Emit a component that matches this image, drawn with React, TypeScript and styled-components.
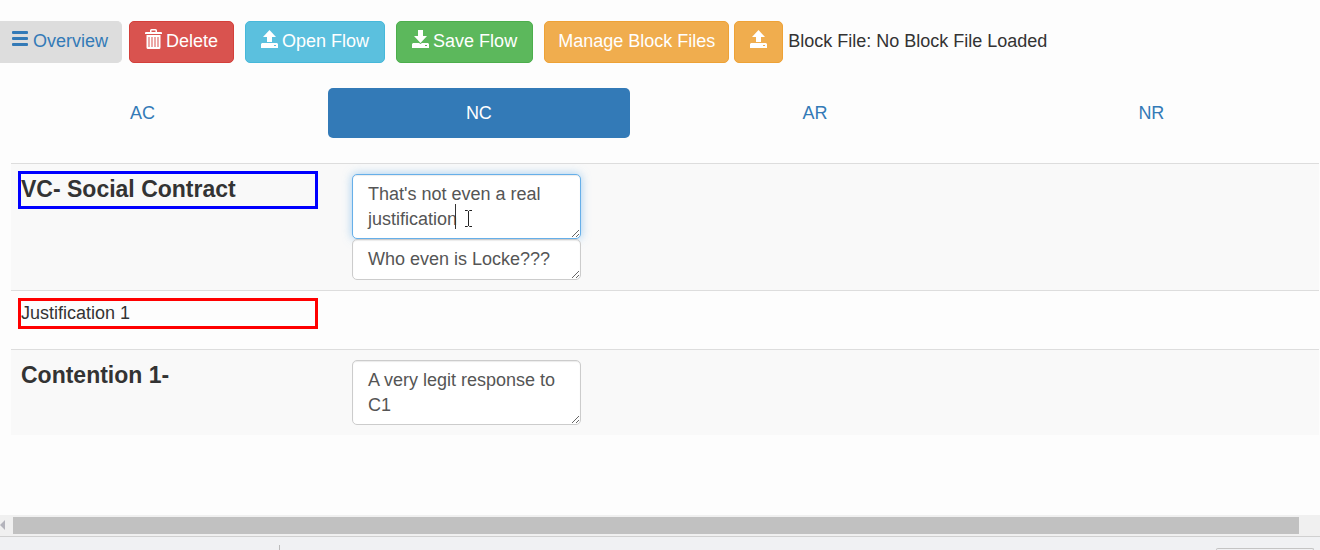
import React from "react";
import styled, { createGlobalStyle, css } from "styled-components";

const GlobalStyle = createGlobalStyle`
  *, *::before, *::after { box-sizing: border-box; }
  body {
    margin: 0;
    background: #fdfdfd;
    color: #333;
    font: 18px/25px "Liberation Sans", Arial, sans-serif;
    overflow: hidden;
  }
`;

const Page = styled.div`
  display: flex;
  flex-direction: column;
  min-height: 100vh;
  overflow: hidden;
`;

const Toolbar = styled.header`
  display: flex;
  align-items: center;
  gap: 11px;
  padding-top: 21px;
`;

const Group = styled.div<{ $gap: number }>`
  display: flex;
  align-items: center;
  gap: ${(p) => p.$gap}px;
`;

const tones = {
  plain: ["#dddddd", "#dddddd", "#337ab7"],
  danger: ["#d9534f", "#d43f3a", "#fff"],
  info: ["#5bc0de", "#46b8da", "#fff"],
  success: ["#5cb85c", "#4cae4c", "#fff"],
  warning: ["#f0ad4e", "#eea236", "#fff"],
};

const Button = styled.button<{ $tone: keyof typeof tones; $flush?: boolean; $pad?: number }>`
  display: flex;
  align-items: center;
  justify-content: center;
  gap: 4px;
  height: 42px;
  padding: 0 ${(p) => p.$pad ?? 15}px 2px;
  border: 1px solid ${(p) => tones[p.$tone][1]};
  border-radius: 5px;
  background: ${(p) => tones[p.$tone][0]};
  color: ${(p) => tones[p.$tone][2]};
  font: inherit;
  white-space: nowrap;
  cursor: pointer;
  ${(p) =>
    p.$flush &&
    css`
      gap: 5px;
      padding-left: 12px;
      border-left: 0;
      border-radius: 0 5px 5px 0;
    `}
`;

const Glyph = styled.svg`
  flex: none;
  fill: currentColor;
  margin-bottom: 4px;
`;

const Status = styled.span`
  padding-bottom: 2px;
  white-space: nowrap;
`;

const Tabs = styled.nav`
  display: grid;
  grid-template-columns: repeat(4, 1fr);
  gap: 35px;
  margin: 25px 18px 25px -8px;
`;

const Tab = styled.a<{ $active?: boolean }>`
  padding: 13px 0 12px;
  border-radius: 5px;
  text-align: center;
  text-decoration: none;
  color: ${(p) => (p.$active ? "#fff" : "#337ab7")};
  background: ${(p) => (p.$active ? "#337ab7" : "transparent")};
`;

const FlowArea = styled.main`
  flex: 1;
  padding: 0 1px 0 11px;
`;

const FlowTable = styled.table`
  width: 100%;
  table-layout: fixed;
  border-collapse: separate;
  border-spacing: 0;
`;

const Column = styled.col<{ $share: string }>`
  width: ${(p) => p.$share};
`;

const Row = styled.tr`
  &:nth-child(odd) {
    background: #f9f9f9;
  }
`;

const Cell = styled.td`
  padding: 10px;
  border-top: 1px solid #ddd;
  vertical-align: top;
`;

const Point = styled.p<{ $mark?: string }>`
  margin: 0 17px 13px 0;
  outline: ${(p) => (p.$mark ? `3px solid ${p.$mark}` : "none")};
`;

const Claim = styled(Point).attrs({ as: "h2" })`
  margin-bottom: 0;
  padding-bottom: 2px;
  font-size: 23px;
  line-height: 30px;
  font-weight: 700;
`;

const Responses = styled.div`
  display: flex;
  flex-direction: column;
  width: 229px;
  position: relative;
`;

const Response = styled.textarea<{ $active?: boolean; $lines: number }>`
  display: block;
  width: 100%;
  height: ${(p) => (p.$lines === 2 ? 65 : 41)}px;
  padding: 7px 15px;
  border: 1px solid ${(p) => (p.$active ? "#66afe9" : "#ccc")};
  border-radius: 5px;
  outline: none;
  background: #fff;
  color: #555;
  font: inherit;
  overflow: hidden;
  resize: vertical;
  box-shadow: ${(p) =>
    p.$active
      ? "inset 0 1px 1px rgba(0,0,0,.08), 0 0 10px rgba(102,175,233,.6)"
      : "inset 0 1px 1px rgba(0,0,0,.08)"};
`;

const Pointer = styled.svg`
  position: absolute;
  left: 103px;
  top: 29px;
  pointer-events: none;
`;

const ScrollTrack = styled.div`
  display: flex;
  align-items: center;
  gap: 7px;
  height: 21px;
  padding: 0 21px 1px 0;
  background: #f0f0f0;
`;

const ScrollThumb = styled.div`
  flex: 1;
  height: 17px;
  background: #c1c1c1;
`;

const Shelf = styled.footer`
  display: flex;
  justify-content: space-between;
  align-items: flex-end;
  height: 14px;
  padding: 0 6px 0 279px;
  border-top: 1px solid #d0d0d0;
  background: #f0f1f3;
`;

const ShelfDivider = styled.div`
  width: 1px;
  height: 5px;
  background: #bbb;
`;

const ShelfButton = styled.div`
  width: 98px;
  height: 2px;
  border: 1px solid #c4c4c4;
  border-bottom: 0;
  border-radius: 3px 3px 0 0;
`;

const MenuIcon = () => (
  <Glyph width="16" height="17" viewBox="0 0 16 17" aria-hidden="true">
    <rect x="0" y="0" width="16" height="3" rx="1" />
    <rect x="0" y="6" width="16" height="3" rx="1" />
    <rect x="0" y="12" width="16" height="3" rx="1" />
  </Glyph>
);

const TrashIcon = () => (
  <Glyph width="17" height="20" viewBox="0 0 17 20" aria-hidden="true">
    <path
      fillRule="evenodd"
      d="M5 3V1.500Q5 0 6.500 0h4Q12 0 12 1.500V3h4q1 0 1 1v1H0V4q0-1 1-1zM6.500 3h4V1.500h-4zM1.500 6h14v12.500q0 1.500-1.500 1.500H3q-1.500 0-1.500-1.500zM3.500 8v10h1V8zm3 0v10h1V8zm3 0v10h1V8zm3 0v10h1V8z"
    />
  </Glyph>
);

const OpenIcon = () => (
  <Glyph width="17" height="18" viewBox="0 0 17 18" aria-hidden="true">
    <path d="M8.500 0L15 7h-4v5H6V7H2z" />
    <path fillRule="evenodd" d="M1 13h15l1 1v4H0v-4zM13 15v1h2v-1z" />
  </Glyph>
);

const SaveIcon = () => (
  <Glyph width="17" height="18" viewBox="0 0 17 18" aria-hidden="true">
    <path d="M6 0h5v6h4l-6.500 7L2 6h4z" />
    <path
      fillRule="evenodd"
      d="M1 13h6l1.500 1 1.500-1h6l1 1v4H0v-4zM13 15v1h2v-1z"
    />
  </Glyph>
);

const tabs = ["AC", "NC", "AR", "NR"];

export default function App() {
  return (
    <>
      <GlobalStyle />
      <Page>
        <Toolbar>
          <Group $gap={7}>
            <Button $tone="plain" $flush $pad={13}><MenuIcon />Overview</Button>
            <Button $tone="danger"><TrashIcon />Delete</Button>
          </Group>
          <Button $tone="info"><OpenIcon />Open Flow</Button>
          <Button $tone="success"><SaveIcon />Save Flow</Button>
          <Group $gap={5}>
            <Button $tone="warning" $pad={13}>Manage Block Files</Button>
            <Button $tone="warning" aria-label="Load block file"><OpenIcon /></Button>
            <Status>Block File: No Block File Loaded</Status>
          </Group>
        </Toolbar>
        <Tabs>
          {tabs.map((name) => (
            <Tab key={name} href={`#${name}`} $active={name === "NC"}>{name}</Tab>
          ))}
        </Tabs>
        <FlowArea>
          <FlowTable>
            <colgroup>
              <Column $share="25.3%" />
              <Column $share="25.7%" />
              <Column $share="49%" />
            </colgroup>
            <tbody>
              <Row>
                <Cell><Claim $mark="#0000ff">VC- Social Contract</Claim></Cell>
                <Cell>
                  <Responses>
                    <Response $active $lines={2} aria-label="Response to value criterion" defaultValue="That's not even a real justification" />
                    <Response $lines={1} aria-label="Second response to value criterion" defaultValue="Who even is Locke???" />
                    <Pointer width="18" height="27" viewBox="0 0 18 27" aria-hidden="true">
                      <path d="M.5 1v25" stroke="#333" />
                      <path d="M10 7.500h2.500l1 1 1-1H17M13.500 8v15M10 23.500h2.500l1-1 1 1H17" fill="none" stroke="#222" />
                    </Pointer>
                  </Responses>
                </Cell>
                <Cell />
              </Row>
              <Row>
                <Cell><Point $mark="#ff0000">Justification 1</Point></Cell>
                <Cell />
                <Cell />
              </Row>
              <Row>
                <Cell><Claim>Contention 1-</Claim></Cell>
                <Cell>
                  <Responses>
                    <Response $lines={2} aria-label="Response to contention 1" defaultValue="A very legit response to C1" />
                  </Responses>
                </Cell>
                <Cell />
              </Row>
            </tbody>
          </FlowTable>
        </FlowArea>
        <ScrollTrack aria-hidden="true">
          <svg width="6" height="10" viewBox="0 0 6 10" fill="#b4b4bc"><path d="M0 5L5 0v10z" /></svg>
          <ScrollThumb />
        </ScrollTrack>
        <Shelf>
          <ShelfDivider />
          <ShelfButton />
        </Shelf>
      </Page>
    </>
  );
}
